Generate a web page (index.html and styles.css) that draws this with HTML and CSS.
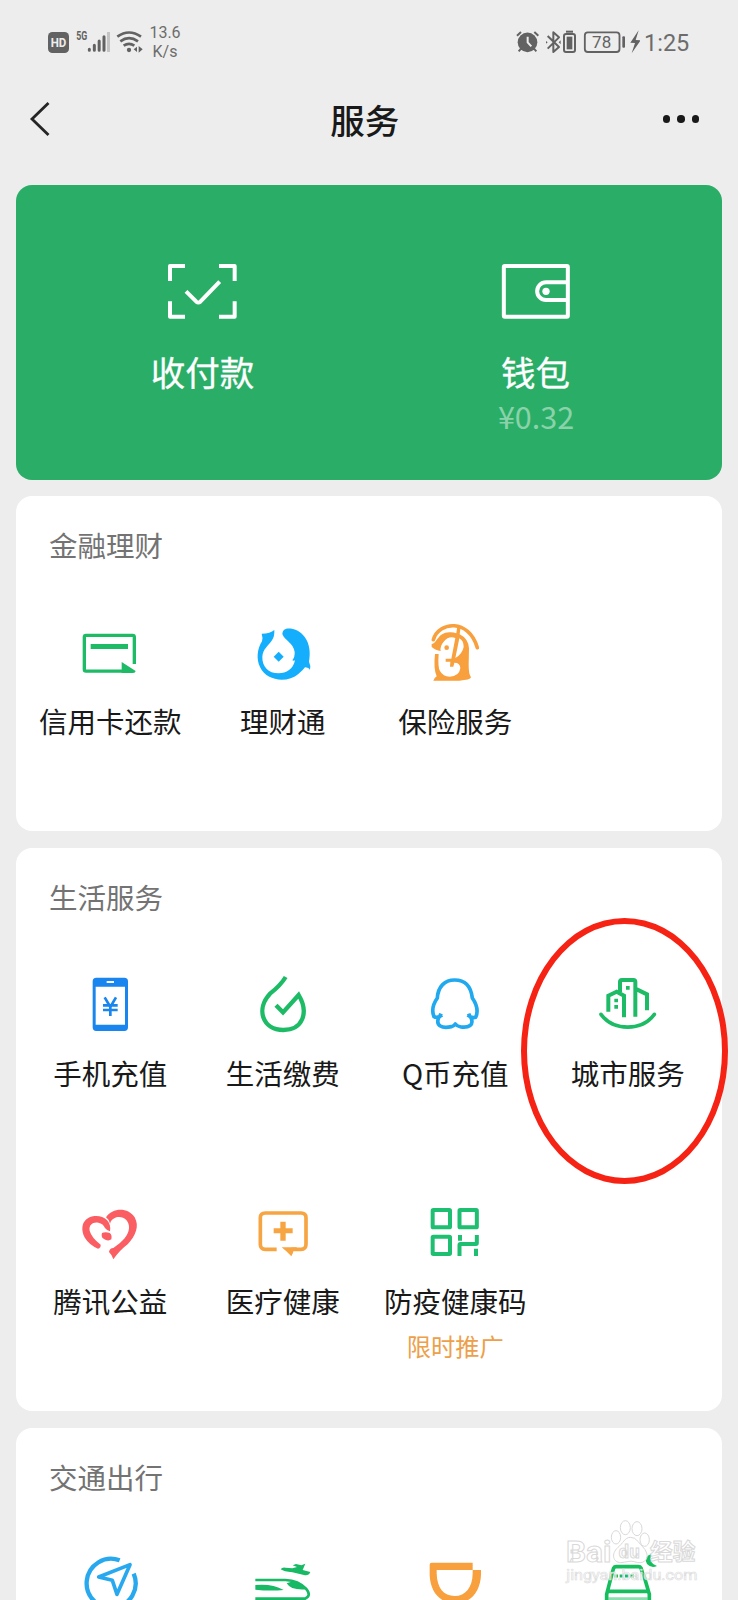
FILE: index.html
```html
<!DOCTYPE html>
<html lang="zh-CN">
<head>
<meta charset="utf-8">
<title>服务</title>
<link rel="stylesheet" href="styles.css">
</head>
<body>
<div class="screen">
  <div class="status">
    <svg class="status-left" viewBox="48 54 294 84">
      <rect x="54" y="66" width="63" height="63" rx="13" fill="#626262"/>
      <text x="85.500" y="111" font-size="37" font-weight="700" text-anchor="middle" textLength="47" lengthAdjust="spacingAndGlyphs" fill="#ededed">HD</text>
      <text x="139" y="91" font-size="37" font-weight="700" textLength="33" lengthAdjust="spacingAndGlyphs" fill="#626262">5G</text>
      <g stroke="#626262" stroke-width="9" stroke-linecap="round"><path d="M178 118v3M193 106v15M207.500 93v28M222 80v41"/></g>
      <path d="M235.500 66v60" stroke="#c4c4c4" stroke-width="9"/>
      <g fill="none" stroke="#626262" stroke-width="8"><path d="M262 80q35-25 71 0M271 94q26-19 53 0M281 107q16-11 32 0"/></g>
      <circle cx="297" cy="120" r="6.500" fill="#626262"/>
      <path d="M321 110v16l-10-8zM326 108v20l12-10z" fill="#626262"/>
    </svg>
    <div class="speed"><span>13.6</span><span>K/s</span></div>
    <svg class="status-right" viewBox="72 54 378 84">
      <circle cx="112.500" cy="97" r="29.500" fill="#626262"/>
      <path d="M81 77l12-11M133 66l12 11M93 116l-7 8M132 116l7 8" stroke="#626262" stroke-width="6"/>
      <path d="M113 80v17l11 12" fill="none" stroke="#ededed" stroke-width="6"/>
      <path d="M173 78l34 33-17 15V67l17 15-34 34" fill="none" stroke="#626262" stroke-width="6" stroke-linejoin="round"/>
      <path d="M168 93l5 4-5 4zM212 91l-6 6 6 6z" fill="#626262"/>
      <rect x="222" y="72" width="33" height="54" rx="6" fill="none" stroke="#626262" stroke-width="6"/>
      <path d="M228 65h21" stroke="#626262" stroke-width="6"/><rect x="230" y="80" width="17" height="38" fill="#626262"/>
      <rect x="284.500" y="67" width="104" height="59" rx="9" fill="none" stroke="#626262" stroke-width="5.500"/>
      <rect x="397" y="79" width="8" height="34" rx="3" fill="#626262"/>
      <text x="335" y="114" font-size="51" text-anchor="middle" fill="#626262">78</text>
      <path d="M446 61l-25 37 14 1-10 31 27-39-15-1z" fill="#626262"/>
    </svg>
    <span class="clock">1:25</span>
  </div>

  <div class="nav">
    <svg class="back" viewBox="0 0 24 40"><path d="M20.500 4L4 20l16.500 16" fill="none" stroke="#252525" stroke-width="2.800"/></svg>
    <h1 class="nav-title">服务</h1>
    <div class="more"><i class="dot"></i><i class="dot"></i><i class="dot"></i></div>
  </div>

  <section class="pay">
    <div class="pay-item">
      <svg class="pay-icon" viewBox="111 66 216 180" fill="none" stroke="#fff" stroke-width="12" stroke-linejoin="round">
        <path d="M165 78h-45v45M267 78h47v45M165 230h-45v-46M267 230h47v-46"/>
        <path d="M168 154l31 31q6 5 12 0l58-60"/>
      </svg>
      <span class="pay-label">收付款</span>
    </div>
    <div class="pay-item">
      <svg class="pay-icon" viewBox="120 66 216 180" fill="none" stroke="#fff" stroke-width="12">
        <rect x="131.500" y="78" width="192" height="152" rx="3"/>
        <path d="M320 127h-62a26.500 26.500 0 0 0 0 53h62"/><circle cx="258" cy="154" r="11" fill="#fff" stroke="none"/>
      </svg>
      <span class="pay-label">钱包</span>
      <span class="pay-amount">¥0.32</span>
    </div>
  </section>

  <section class="card">
    <h2 class="card-title">金融理财</h2>
    <div class="grid">
      <div class="item">
        <svg class="icon" viewBox="235 423 192 192">
          <path d="M367 573.500H259q-5 0-5-5V471q0-5 5-5h140q5 0 5 5v81" fill="none" stroke="#1ebb66" stroke-width="10"/>
          <path d="M273 492h112v15H273zM366 546l42 27q-1 6-8 6h-34z" fill="#1ebb66"/>
        </svg>
        <span class="label">信用卡还款</span>
      </div>
      <div class="item">
        <svg class="icon" viewBox="752 423 192 192" fill="#15aefc">
          <path d="M822 450Q810 461 784 461Q788 472 785 484C770 508 768 538 779 561C798 603 860 611 895 581Q907 572 914 562Q925 562 929 570Q932 557 926 545C935 500 918 458 878 447C859 443 847 447 846 462C852 481 880 489 883 516Q884 531 876 541Q880 543 884 541C879 567 858 580 835 580C804 580 785 559 786 530C787 507 806 496 815 481Q823 469 822 450Z"/>
          <path d="M835 515l15 15-15 15-15-15z"/>
        </svg>
        <span class="label">理财通</span>
      </div>
      <div class="item">
        <svg class="icon" viewBox="250 63 192 192">
          <path d="M281 119C298 64 387 55 413 143" fill="none" stroke="#f7a03d" stroke-width="11" stroke-linecap="round"/>
          <path fill="#f7a03d" fill-rule="evenodd" d="M276 132C292 132 293 98 329 97Q340 96 350 100L353 78L363 79L360 103Q386 116 388 145L387 195Q387 223 394 232Q392 240 359 242H281Q281 236 291 229Q281 207 286 162H297Q294 202 301 213Q310 230 330 230Q358 230 362 205Q362 188 344 188L341 200H331L332 185H318V176H335L347 114Q327 107 312 125Q300 139 303 153Q288 152 276 141ZM359 115L347 174Q368 162 372 141Q372 122 359 115Z"/>
          <circle cx="321" cy="143" r="7" fill="#f7a03d"/>
        </svg>
        <span class="label">保险服务</span>
      </div>
    </div>
  </section>

  <section class="card">
    <h2 class="card-title">生活服务</h2>
    <div class="grid">
      <div class="item">
        <svg class="icon" viewBox="175 39 192 192">
          <path fill="#1985ee" fill-rule="evenodd" d="M230 53h84q11 0 11 11v138q0 11-11 11h-84q-11 0-11-11V64q0-11 11-11zM228 80v114h88V80zM261 63v6h22v-6z"/>
          <path d="M255 112l17 29 17-29M250 136h44M250 150h44M272 140v28" fill="none" stroke="#1985ee" stroke-width="8"/>
        </svg>
        <span class="label">手机充值</span>
      </div>
      <div class="item">
        <svg class="icon" viewBox="692 39 192 192">
          <path d="M796 51Q781 76 749 101C706 147 726 210 789 210C846 210 867 159 835 105L788 157L767 136" fill="none" stroke="#1ebb66" stroke-width="13"/>
        </svg>
        <span class="label">生活缴费</span>
      </div>
      <div class="item">
        <svg class="icon" viewBox="130 219 192 192">
          <path d="M187 345Q173 356 163 350Q152 324 173 294C175 261 194 240 225 240C257 240 274 260 278 294Q300 326 288 352Q278 356 264 345M176 356C169 377 186 386 215 380Q223 378 227 372Q232 379 244 381C268 384 282 375 275 356M174 357Q181 350 184 341M277 357Q270 350 267 341" fill="none" stroke="#20a9ee" stroke-width="11" stroke-linejoin="round"/>
        </svg>
        <span class="label">Q币充值</span>
      </div>
      <div class="item">
        <svg class="icon" viewBox="647 219 192 192">
          <path d="M662 343C699 394 785 394 822 343" fill="none" stroke="#1ebb66" stroke-width="11" stroke-linecap="round"/>
          <path d="M684 335v-48l25-12 22 12v65M719 276v-30q0-6 6-6h34q6 0 6 6v104M765 266l35 17v48" fill="none" stroke="#1ebb66" stroke-width="12"/>
          <path d="M702 296h11v11h-11zM702 315h11v11h-11zM737 258h11v11h-11z" fill="#1ebb66"/>
        </svg>
        <span class="label">城市服务</span>
        <i class="highlight"></i>
      </div>
      <div class="item">
        <svg class="icon" viewBox="175 33 192 192" fill="#fa5e63">
          <path d="M259 82C278 53 325 51 345 82C360 109 348 137 324 163Q301 180 281 208Q276 193 268 186Q270 174 281 174C309 155 326 137 328 115C330 91 310 77 290 82Q274 88 271 101Q268 88 259 82Z"/>
          <path d="M271 124C278 91 246 73 220 79C185 86 182 119 196 144Q209 165 235 176Q244 173 243 164Q215 142 210 122C207 104 220 95 236 98Q251 101 256 114Q261 121 271 124Z"/>
          <path d="M247 129Q257 124 270 129Q278 134 275 148Q267 154 257 149Q242 144 247 129Z"/>
        </svg>
        <span class="label">腾讯公益</span>
      </div>
      <div class="item">
        <svg class="icon" viewBox="692 33 192 192">
          <path d="M769 178h-34q-15 0-15-15V83q0-14 15-14h107q15 0 15 14v80q0 15-15 15h-29" fill="none" stroke="#f7a443" stroke-width="11"/>
          <path d="M784 172l14 12 15 15q6-9 6-16h10v-11zM780 95h16v20h21v15h-21v22h-16v-22h-20v-15h20z" fill="#f7a443"/>
        </svg>
        <span class="label">医疗健康</span>
      </div>
      <div class="item">
        <svg class="icon" viewBox="190 33 192 192" fill="none" stroke="#1ebf70" stroke-width="12">
          <rect x="219" y="60" width="52" height="52" rx="2"/><rect x="299.500" y="60" width="52" height="52" rx="2"/><rect x="219" y="140" width="52" height="52" rx="2"/>
          <path d="M299.500 198v-33q0-3 3-3h46q3 0 3-3v-24M301 135v17M349 176v22" stroke-linejoin="round"/>
        </svg>
        <span class="label">防疫健康码</span>
        <span class="promo">限时推广</span>
      </div>
    </div>
  </section>

  <section class="card">
    <h2 class="card-title">交通出行</h2>
    <div class="grid">
      <div class="item">
        <svg class="icon" viewBox="235 459 192 192" fill="none" stroke="#28a9ef" stroke-width="13">
          <path d="M360 481A73.500 73.500 0 1 0 402 521"/>
          <path d="M297 531l94-37-39 89-14-42z" stroke-width="11" stroke-linejoin="round"/>
        </svg>
      </div>
      <div class="item">
        <svg class="icon" viewBox="752 459 192 192" fill="#17b965">
          <path d="M841 508Q846 500 856 503L876 505L890 501L877 496L887 492L903 496L915 491L907 510L930 516Q925 528 911 525L876 517Q851 515 841 508Z"/>
          <path d="M765 555Q815 550 850 570Q810 574 765 569ZM859 550Q871 544 889 545Q908 552 919 568Q872 572 859 550Z"/>
          <path d="M765 540h90Q895 542 917 566Q935 587 914 596H765" fill="none" stroke="#17b965" stroke-width="8"/>
        </svg>
      </div>
      <div class="item">
        <svg class="icon" viewBox="70 219 192 192">
          <path fill="#f7a03d" fill-rule="evenodd" d="M96 248h123v22h25v14C242 337 211 370 167 370C122 370 92 337 90 285V254q0-6 6-6zM111 270v10C112 325 132 348 165 348C198 348 218 322 219 281V270z"/>
        </svg>
      </div>
      <div class="item">
        <svg class="icon" viewBox="587 219 192 192">
          <path d="M635 281l5-17q2-4 8-4h66q6 0 8 4l5 17M635 281l-16 62v25M729 281l18 62v25M619 334h128" fill="none" stroke="#16bd5d" stroke-width="11"/>
          <path d="M624 352h118v40H624z" fill="#16bd5d" fill-opacity=".5"/>
          <path d="M642 288h66" stroke="#16bd5d" stroke-width="9" stroke-dasharray="11 5"/>
          <path d="M752 222Q729 231 740 252Q753 266 770 258Q745 251 752 222Z" fill="#16bd5d"/>
        </svg>
      </div>
    </div>
  </section>

  <svg class="watermark" viewBox="490 110 414 210">
    <g fill="#fff" fill-opacity=".45" stroke="#d9d9d9" stroke-width="3">
      <ellipse cx="677" cy="142" rx="15" ry="21"/><ellipse cx="712" cy="145" rx="15" ry="21"/>
      <ellipse cx="649" cy="171" rx="14" ry="20"/><ellipse cx="735" cy="178" rx="14" ry="20"/>
      <path d="M692 171C676 171 669 190 655 201C633 221 640 246 663 247C678 246 691 240 704 244C729 254 748 239 741 218C737 203 722 195 716 184Q705 170 692 171Z"/>
      <text x="499" y="245" font-size="91" font-weight="700" textLength="136" lengthAdjust="spacingAndGlyphs">Bai</text>
      <text x="657" y="234" font-size="54" font-weight="700" textLength="63">du</text>
      <text x="751" y="239" font-size="68" font-weight="700">经验</text>
    </g>
    <text x="500" y="298" font-size="44" textLength="393" lengthAdjust="spacingAndGlyphs" fill="#fff" fill-opacity=".6" stroke="#dedede" stroke-width="2">jingyan.baidu.com</text>
  </svg>
</div>
</body>
</html>
```
FILE: styles.css
```css
* { box-sizing: border-box; }
html { overflow: hidden; }
body {
  margin: 0;
  background: #ededed;
  color: #191919;
  font-family: Roboto, "Noto Sans CJK SC", sans-serif;
}
svg { display: block; flex: none; }
.screen { position: relative; width: 738px; height: 1600px; overflow: hidden; }

.status { display: flex; height: 84px; padding: 28px 48px 0 46px; color: #6c6c6c; }
.status-left { width: 98px; height: 28px; }
.speed {
  display: flex;
  flex-direction: column;
  align-items: center;
  width: 34px;
  margin: -4px 0 0 4px;
  font-size: 16px;
  line-height: 18.500px;
}
.status-right { width: 126px; height: 28px; margin-left: auto; }
.clock { width: 46px; margin-left: 4px; font-size: 23.500px; line-height: 31px; white-space: nowrap; }

.nav {
  display: flex;
  align-items: center;
  justify-content: space-between;
  height: 74px;
  padding: 0 39px 0 28px;
}
.back { width: 24px; height: 40px; margin-top: -4px; }
.nav-title { margin: 0; padding: 2px 0 0 15px; font-size: 34.500px; font-weight: 500; line-height: 50px; }
.more { display: flex; gap: 7px; margin-top: -4px; }
.dot { width: 7.500px; height: 7.500px; border-radius: 50%; background: #191919; }

.pay {
  display: flex;
  height: 295px;
  margin: 27px 16px 16px;
  padding: 77px 20px 0;
  border-radius: 16px;
  background: #2aae67;
  color: #fff;
}
.pay-item { display: flex; flex: 1; flex-direction: column; align-items: center; }
.pay-icon { width: 72px; height: 60px; }
.pay-label { margin-top: 27px; font-size: 34.500px; line-height: 50px; -webkit-text-stroke: .3px #fff; }
.pay-amount {
  margin-top: -3px;
  padding-left: 1px;
  color: #8bd2aa;
  font-family: "Noto Sans CJK SC", sans-serif;
  font-size: 30.500px;
  line-height: 40px;
}

.card {
  margin: 0 16px 17px;
  padding: 32px 8px 0;
  border-radius: 16px;
  background: #fff;
}
.card-title {
  margin: 0 0 53px;
  padding-left: 25px;
  color: #737373;
  font-size: 28.500px;
  font-weight: 400;
  line-height: 40px;
}
.grid { display: grid; grid-template-columns: repeat(4, 1fr); grid-auto-rows: 210px; row-gap: 18px; }
.item { position: relative; display: flex; flex-direction: column; align-items: center; }
.icon { width: 64px; height: 64px; }
.label {
  margin-top: 16px;
  font-family: "Noto Sans CJK SC", sans-serif;
  font-size: 28.500px;
  line-height: 40px;
  white-space: nowrap;
}
.promo { margin-top: 7px; color: #eda04a; font-size: 24.300px; line-height: 40px; }

.highlight {
  position: absolute;
  top: -55px;
  left: -21px;
  z-index: 1;
  width: 207px;
  height: 266px;
  border: 6px solid #f62315;
  border-radius: 50%;
}
.watermark { position: absolute; left: 563px; top: 1517px; width: 138px; height: 70px; }
```
